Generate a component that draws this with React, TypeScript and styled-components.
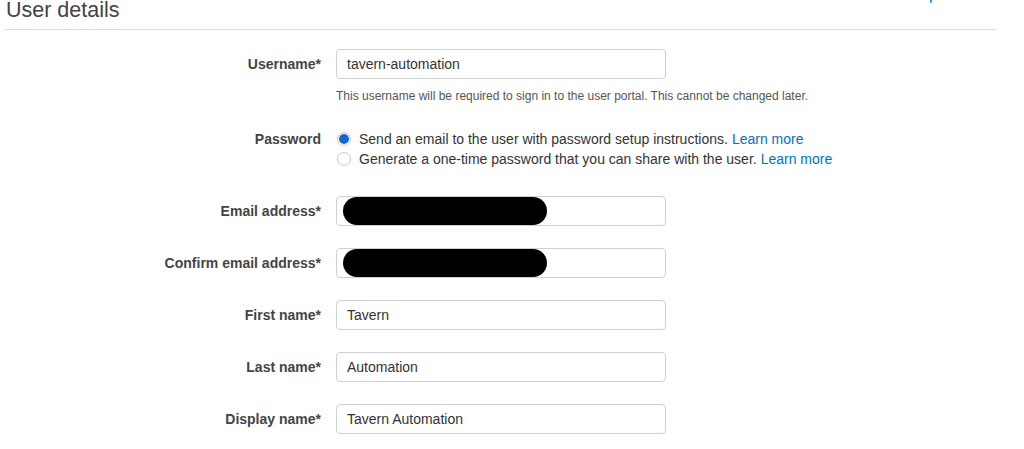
import React from "react";
import styled, { createGlobalStyle } from "styled-components";

const GlobalStyle = createGlobalStyle`
  html, body {
    margin: 0;
    padding: 0;
    background: #ffffff;
    overflow: hidden;
  }
  body {
    font-family: "Liberation Sans", Arial, Helvetica, sans-serif;
    color: #444444;
  }
`;

const Page = styled.div`
  width: 1024px;
  height: 449px;
  padding: 0 27px 0 5px;
  box-sizing: border-box;
`;

const HeaderRow = styled.div`
  display: flex;
  justify-content: space-between;
  align-items: flex-start;
  height: 29px;
  border-bottom: 1px solid #dcdcdc;
`;

const Title = styled.h2`
  margin: 0;
  padding-left: 1px;
  font-size: 21.5px;
  line-height: 20px;
  font-weight: 400;
  color: #444444;
`;

/* the descender of a link that sits above the visible area */
const ClippedLink = styled.span`
  display: block;
  width: 2px;
  height: 3px;
  margin-right: 65px;
  background: #3d8fd6;
  border-radius: 0 0 1px 1px;
`;

const Form = styled.div`
  display: grid;
  grid-template-columns: 316px 330px;
  column-gap: 15px;
  padding-top: 19px;
`;

const Label = styled.div<{ $top?: boolean; $gap?: number }>`
  font-size: 14px;
  font-weight: 700;
  color: #444444;
  text-align: right;
  align-self: ${(p) => (p.$top ? "start" : "center")};
  line-height: 20px;
  margin-bottom: ${(p) => p.$gap ?? 0}px;
`;

const Field = styled.div<{ $gap: number }>`
  margin-bottom: ${(p) => p.$gap}px;
`;

const InputBox = styled.div`
  position: relative;
  box-sizing: border-box;
  height: 30px;
  border: 1px solid #d0d0d0;
  border-radius: 4px;
  background: #fff;
  display: flex;
  align-items: center;
  padding: 0 10px;
  font-size: 14px;
  color: #333333;
`;

const Redaction = styled.div`
  position: absolute;
  left: 6px;
  top: 0;
  width: 204px;
  height: 28px;
  border-radius: 14px;
  background: #000;
`;

const Hint = styled.div`
  margin-top: 10px;
  font-size: 12px;
  line-height: 14px;
  color: #555555;
  white-space: nowrap;
`;

const RadioGroup = styled.div`
  display: flex;
  flex-direction: column;
`;

const RadioRow = styled.label`
  display: flex;
  align-items: center;
  height: 20px;
  font-size: 14px;
  color: #333333;
  white-space: nowrap;
`;

const RadioCircle = styled.span<{ $checked?: boolean }>`
  box-sizing: border-box;
  width: 14px;
  height: 14px;
  border-radius: 50%;
  border: 1px solid #c8c8c8;
  background: #fff;
  margin: 0 8px 0 1px;
  display: flex;
  align-items: center;
  justify-content: center;
  flex: none;
  &::after {
    content: "";
    display: ${(p) => (p.$checked ? "block" : "none")};
    width: 10px;
    height: 10px;
    border-radius: 50%;
    background: #1767d1;
  }
`;

const Link = styled.a`
  color: #0073bb;
  text-decoration: none;
  margin-left: 4px;
`;

const Spacer = styled.div``;

type Row = { label: string; value?: string; redacted?: boolean };

const rows: Row[] = [
  { label: "Email address*", redacted: true },
  { label: "Confirm email address*", redacted: true },
  { label: "First name*", value: "Tavern" },
  { label: "Last name*", value: "Automation" },
  { label: "Display name*", value: "Tavern Automation" },
];

export default function App() {
  return (
    <>
      <GlobalStyle />
      <Page>
        <HeaderRow>
          <Title>User details</Title>
          <ClippedLink />
        </HeaderRow>
        <Form>
          <Label>Username*</Label>
          <InputBox>tavern-automation</InputBox>
          <Spacer />
          <Field $gap={26}>
            <Hint>
              This username will be required to sign in to the user portal. This cannot be changed later.
            </Hint>
          </Field>

          <Label $top>Password</Label>
          <Field $gap={27}>
            <RadioGroup>
              <RadioRow>
                <RadioCircle $checked />
                Send an email to the user with password setup instructions.
                <Link>Learn more</Link>
              </RadioRow>
              <RadioRow>
                <RadioCircle />
                Generate a one-time password that you can share with the user.
                <Link>Learn more</Link>
              </RadioRow>
            </RadioGroup>
          </Field>

          {rows.map((r) => (
            <React.Fragment key={r.label}>
              <Label $gap={22}>{r.label}</Label>
              <Field $gap={22}>
                <InputBox>{r.redacted ? <Redaction /> : r.value}</InputBox>
              </Field>
            </React.Fragment>
          ))}
        </Form>
      </Page>
    </>
  );
}
